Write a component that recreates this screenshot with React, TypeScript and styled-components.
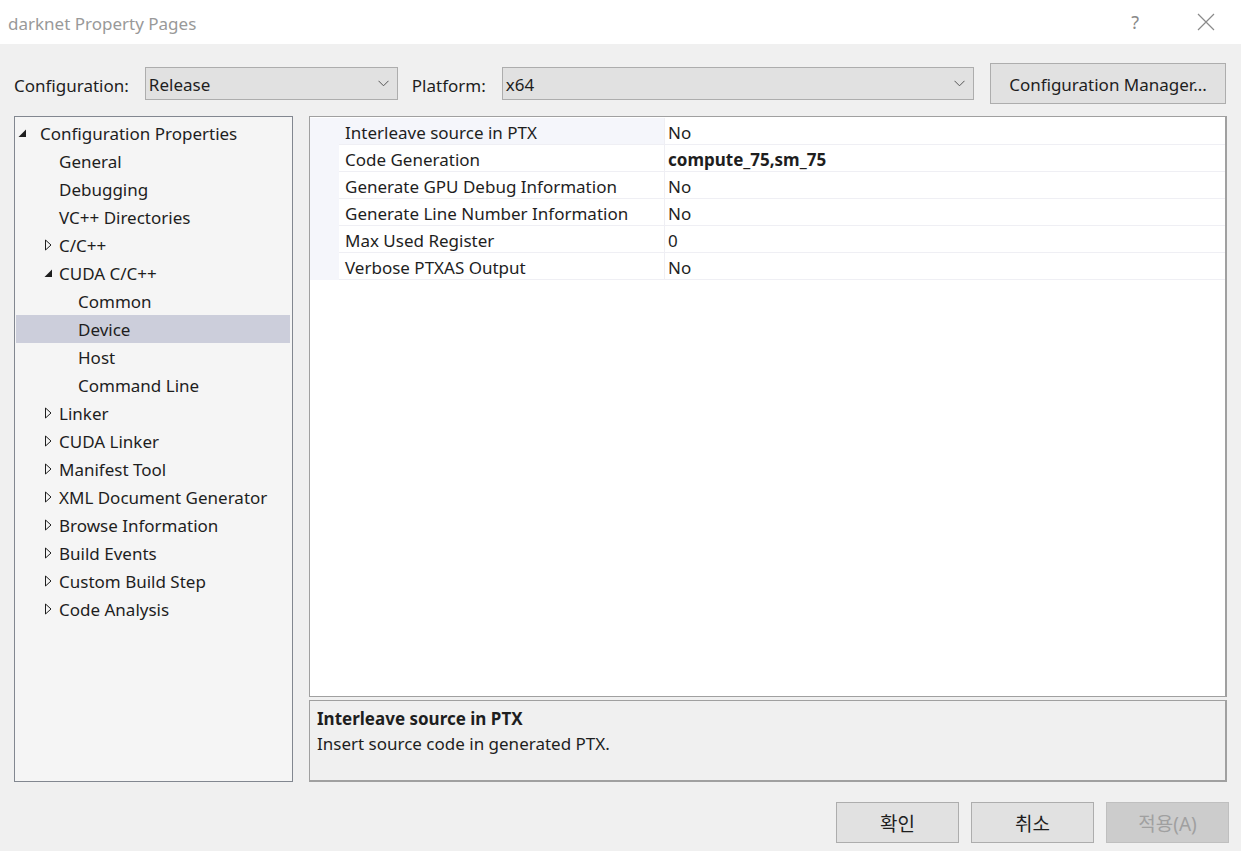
import styled, { createGlobalStyle } from "styled-components";

const GlobalStyle = createGlobalStyle`
  html, body {
    margin: 0;
    padding: 0;
    background: #f0f0f0;
  }
  * {
    box-sizing: border-box;
  }
`;

interface TreeItem {
  label: string;
  level: number;
  expander?: "open" | "closed";
  selected?: boolean;
}

const treeItems: TreeItem[] = [
  { label: "Configuration Properties", level: 0, expander: "open" },
  { label: "General", level: 1 },
  { label: "Debugging", level: 1 },
  { label: "VC++ Directories", level: 1 },
  { label: "C/C++", level: 1, expander: "closed" },
  { label: "CUDA C/C++", level: 1, expander: "open" },
  { label: "Common", level: 2 },
  { label: "Device", level: 2, selected: true },
  { label: "Host", level: 2 },
  { label: "Command Line", level: 2 },
  { label: "Linker", level: 1, expander: "closed" },
  { label: "CUDA Linker", level: 1, expander: "closed" },
  { label: "Manifest Tool", level: 1, expander: "closed" },
  { label: "XML Document Generator", level: 1, expander: "closed" },
  { label: "Browse Information", level: 1, expander: "closed" },
  { label: "Build Events", level: 1, expander: "closed" },
  { label: "Custom Build Step", level: 1, expander: "closed" },
  { label: "Code Analysis", level: 1, expander: "closed" },
];

const properties = [
  { name: "Interleave source in PTX", value: "No", current: true },
  { name: "Code Generation", value: "compute_75,sm_75", bold: true },
  { name: "Generate GPU Debug Information", value: "No" },
  { name: "Generate Line Number Information", value: "No" },
  { name: "Max Used Register", value: "0" },
  { name: "Verbose PTXAS Output", value: "No" },
];

// gap between expander slot and label, per tree level
const labelGap = [13, 6, -1];

const Chevron = () => (
  <svg width="11" height="7" viewBox="0 0 11 7">
    <polyline points="0.5,0.8 5.5,5.8 10.5,0.8" fill="none" stroke="#555" strokeWidth="1" />
  </svg>
);

const Expander = ({ open }: { open: boolean }) =>
  open ? (
    <svg width="9" height="9" viewBox="0 0 9 9">
      <polygon points="8,0.5 8,8 0.5,8" fill="#1e1e1e" />
    </svg>
  ) : (
    <svg width="9" height="12" viewBox="0 0 9 12">
      <polygon points="1.5,1 7,6 1.5,11" fill="none" stroke="#1e1e1e" strokeWidth="1" />
    </svg>
  );

const App = () => {
  return (
    <Window>
      <GlobalStyle />
      <TitleBar>
        <Title>darknet Property Pages</Title>
        <TitleButtons>
          <HelpMark>?</HelpMark>
          <svg width="18" height="18" viewBox="0 0 18 18">
            <path d="M1 1 L17 17 M17 1 L1 17" stroke="#8a8a8a" strokeWidth="1.2" fill="none" />
          </svg>
        </TitleButtons>
      </TitleBar>

      <Body>
        <ConfigRow>
          <Label>Configuration:</Label>
          <Combo $width={253}>
            <ComboText>Release</ComboText>
            <Chevron />
          </Combo>
          <Label $ml={14}>Platform:</Label>
          <Combo $width={472}>
            <ComboText>x64</ComboText>
            <Chevron />
          </Combo>
          <ManagerButton>Configuration Manager...</ManagerButton>
        </ConfigRow>

        <Main>
          <Tree>
            {treeItems.map((item) => (
              <TreeRow key={item.label} $selected={!!item.selected}>
                <ExpanderSlot $level={item.level}>
                  {item.expander && <Expander open={item.expander === "open"} />}
                </ExpanderSlot>
                <TreeLabel $gap={labelGap[item.level]}>{item.label}</TreeLabel>
              </TreeRow>
            ))}
          </Tree>

          <RightColumn>
            <Grid>
              {properties.map((p) => (
                <GridRow key={p.name}>
                  <Gutter />
                  <NameCell $current={!!p.current}>{p.name}</NameCell>
                  <ValueCell $bold={!!p.bold}>{p.value}</ValueCell>
                </GridRow>
              ))}
            </Grid>
            <Description>
              <DescTitle>Interleave source in PTX</DescTitle>
              <DescText>Insert source code in generated PTX.</DescText>
            </Description>
          </RightColumn>
        </Main>

        <Footer>
          <DialogButton>확인</DialogButton>
          <DialogButton>취소</DialogButton>
          <DialogButton $disabled>적용(A)</DialogButton>
        </Footer>
      </Body>
    </Window>
  );
};

const font = `"Noto Sans", "Noto Sans CJK KR", sans-serif`;

const Window = styled.div`
  width: 1241px;
  height: 851px;
  display: flex;
  flex-direction: column;
  font-family: ${font};
  color: #1e1e1e;
  overflow: hidden;
`;

const TitleBar = styled.div`
  height: 44px;
  background: #ffffff;
  display: flex;
  align-items: center;
  justify-content: space-between;
  padding: 0 26px 0 8px;
`;

const Title = styled.div`
  font-size: 17px;
  color: #999999;
  padding-top: 2px;
`;

const TitleButtons = styled.div`
  display: flex;
  align-items: center;
  gap: 58px;
`;

const HelpMark = styled.span`
  font-size: 18px;
  color: #8a8a8a;
`;

const Body = styled.div`
  flex: 1;
  background: #f0f0f0;
  display: flex;
  flex-direction: column;
  padding: 19px 12px 8px 14px;
`;

const ConfigRow = styled.div`
  display: flex;
  align-items: center;
  height: 41px;
  padding-right: 3px;
`;

const Label = styled.span<{ $ml?: number }>`
  font-size: 17px;
  padding-top: 3px;
  margin-left: ${(p) => p.$ml ?? 0}px;
  margin-right: 16px;
`;

const Combo = styled.div<{ $width: number }>`
  width: ${(p) => p.$width}px;
  height: 33px;
  background: #e1e1e1;
  border: 1px solid #adadad;
  display: flex;
  align-items: center;
  justify-content: space-between;
  padding: 0 8px 0 3px;
  font-size: 17px;
`;

const ComboText = styled.span`
  padding-top: 2px;
`;

const ManagerButton = styled.div`
  margin-left: auto;
  width: 236px;
  height: 41px;
  background: #e1e1e1;
  border: 1px solid #adadad;
  display: flex;
  align-items: center;
  justify-content: center;
  padding-top: 2px;
  font-size: 17px;
`;

const Main = styled.div`
  display: flex;
  gap: 16px;
  margin-top: 12px;
  height: 666px;
`;

const Tree = styled.div`
  width: 279px;
  background: #f5f5f5;
  border: 1px solid #828790;
  padding: 2px 2px 0 1px;
`;

const TreeRow = styled.div<{ $selected: boolean }>`
  height: 28px;
  display: flex;
  align-items: center;
  background: ${(p) => (p.$selected ? "#cccedb" : "transparent")};
`;

const ExpanderSlot = styled.div<{ $level: number }>`
  width: 9px;
  margin-left: ${(p) => 2 + p.$level * 26}px;
  display: flex;
  align-items: center;
  justify-content: center;
`;

const TreeLabel = styled.span<{ $gap: number }>`
  font-size: 17px;
  margin-left: ${(p) => p.$gap}px;
  white-space: nowrap;
`;

const RightColumn = styled.div`
  flex: 1;
  display: flex;
  flex-direction: column;
  gap: 3px;
  margin-right: 2px;
`;

const Grid = styled.div`
  flex: 1;
  background: #ffffff;
  border: 1px solid #a0a0a0;
  border-right-width: 2px;
  padding-top: 1px;
`;

const GridRow = styled.div`
  height: 27px;
  display: flex;
  font-size: 17px;
`;

const Gutter = styled.div`
  width: 29px;
  background: #f5f6fb;
`;

const NameCell = styled.div<{ $current: boolean }>`
  width: 326px;
  padding: 2px 0 0 6px;
  display: flex;
  align-items: center;
  background: ${(p) => (p.$current ? "#f5f6fb" : "#ffffff")};
  border-bottom: 1px solid #efeff4;
  border-right: 1px solid #efeff4;
  white-space: nowrap;
`;

const ValueCell = styled.div<{ $bold: boolean }>`
  flex: 1;
  padding: 2px 0 0 3px;
  display: flex;
  align-items: center;
  border-bottom: 1px solid #efeff4;
  font-weight: ${(p) => (p.$bold ? 700 : 400)};
`;

const Description = styled.div`
  height: 82px;
  border: 1px solid #a0a0a0;
  border-right-width: 2px;
  border-bottom-width: 2px;
  padding: 5px 7px;
  background: #f0f0f0;
`;

const DescTitle = styled.div`
  font-size: 17px;
  font-weight: 700;
  line-height: 25px;
`;

const DescText = styled.div`
  font-size: 17px;
  line-height: 25px;
`;

const Footer = styled.div`
  display: flex;
  justify-content: flex-end;
  gap: 12px;
  margin-top: 20px;
`;

const DialogButton = styled.div<{ $disabled?: boolean }>`
  width: 123px;
  height: 41px;
  display: flex;
  align-items: center;
  justify-content: center;
  font-size: 19px;
  background: ${(p) => (p.$disabled ? "#cccccc" : "#e1e1e1")};
  color: ${(p) => (p.$disabled ? "#a0a0a0" : "#1e1e1e")};
  border: 1px solid ${(p) => (p.$disabled ? "#bfbfbf" : "#adadad")};
`;

export default App;
